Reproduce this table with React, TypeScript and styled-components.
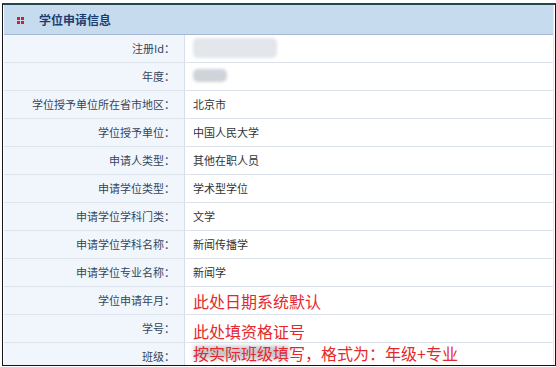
import React from "react";
import styled, { createGlobalStyle } from "styled-components";

const Global = createGlobalStyle`
  html, body { margin: 0; padding: 0; background: #ffffff; }
  body { font-family: "Noto Sans CJK SC", "Noto Sans", sans-serif; }
`;

const Frame = styled.div`
  box-sizing: border-box;
  margin: 3px 0 0 2px;
  width: 554px;
  height: 363px;
  border: 1px solid #151515;
  border-top: 2px solid #27454d;
  padding: 0 1px 0 1px;
  overflow: hidden;
  background: #ffffff;
`;

const Panel = styled.div`
  display: flex;
  flex-direction: column;
  border-right: 1px solid #e3e8ee;
`;

const Header = styled.div`
  display: flex;
  align-items: center;
  gap: 15px;
  height: 29px;
  padding-left: 13px;
  background: #c7dbee;
  border-bottom: 1px solid #a5b9d5;
  font-size: 12px;
  font-weight: bold;
  color: #1d3d70;
`;

const Dots = styled.span`
  display: grid;
  grid-template-columns: 3px 3px;
  grid-template-rows: 3px 3px;
  gap: 1px;
  margin-top: 1px;
  & > i {
    display: block;
    background: #d0202c;
  }
`;

const Row = styled.div`
  display: grid;
  grid-template-columns: 181px 1fr;
  height: 27px;
  border-bottom: 1px solid #dde3ea;
`;

const Label = styled.div`
  display: flex;
  align-items: center;
  justify-content: flex-end;
  padding-right: 9px;
  padding-bottom: 2px;
  background: #f1f6fc;
  border-right: 1px solid #d7e0ea;
  font-size: 11px;
  color: #33455e;
  white-space: nowrap;
`;

const Value = styled.div`
  display: flex;
  align-items: center;
  padding-left: 8px;
  padding-bottom: 2px;
  font-size: 11px;
  color: #333333;
  white-space: nowrap;
  position: relative;
`;

const Blur = styled.span<{ $w: number; $h: number; $c: string }>`
  display: block;
  width: ${(p) => p.$w}px;
  height: ${(p) => p.$h}px;
  background: ${(p) => p.$c};
  border-radius: 5px;
  filter: blur(1.5px);
`;

const Note = styled.span<{ $nudge: number }>`
  position: relative;
  font-size: 16px;
  color: #e5282c;
  transform: translateY(${(p) => p.$nudge}px);
  white-space: nowrap;
`;

const Smudge = styled.span`
  position: absolute;
  left: 1px;
  top: 5px;
  width: 95px;
  height: 13px;
  background: #c6c9cf;
  filter: blur(2px);
`;

const NoteText = styled.span`
  position: relative;
`;

type Item = { label: string; value?: React.ReactNode };

const rows: Item[] = [
  { label: "注册Id：", value: <Blur $w={84} $h={20} $c="#e2e5ea" /> },
  { label: "年度：", value: <Blur $w={34} $h={13} $c="#cfd3da" /> },
  { label: "学位授予单位所在省市地区：", value: "北京市" },
  { label: "学位授予单位：", value: "中国人民大学" },
  { label: "申请人类型：", value: "其他在职人员" },
  { label: "申请学位类型：", value: "学术型学位" },
  { label: "申请学位学科门类：", value: "文学" },
  { label: "申请学位学科名称：", value: "新闻传播学" },
  { label: "申请学位专业名称：", value: "新闻学" },
  { label: "学位申请年月：", value: <Note $nudge={1}>此处日期系统默认</Note> },
  { label: "学号：", value: <Note $nudge={3}>此处填资格证号</Note> },
  {
    label: "班级：",
    value: (
      <Note $nudge={-3}>
        <Smudge />
        <NoteText>按实际班级填写，格式为：年级+专业</NoteText>
      </Note>
    ),
  },
];

export default function App() {
  return (
    <>
      <Global />
      <Frame>
        <Panel>
          <Header>
            <Dots>
              <i />
              <i />
              <i />
              <i />
            </Dots>
            <span>学位申请信息</span>
          </Header>
          {rows.map((r) => (
            <Row key={r.label}>
              <Label>{r.label}</Label>
              <Value>{r.value}</Value>
            </Row>
          ))}
        </Panel>
      </Frame>
    </>
  );
}
